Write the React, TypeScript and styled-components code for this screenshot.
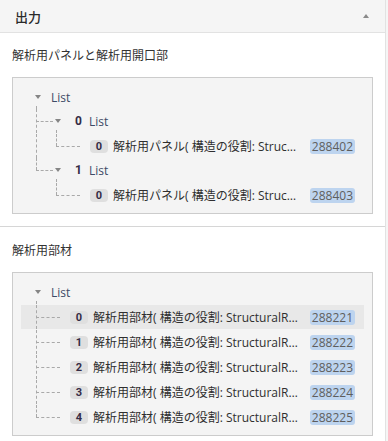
import styled, { createGlobalStyle } from 'styled-components';

type TreeNode =
  | { kind: 'list'; index?: number; children: TreeNode[] }
  | { kind: 'item'; index: number; label: string; id: string };

type Cell = 'none' | 'pass' | 'elbow' | 'elbowLast';

type FlatRow = {
  node: TreeNode;
  depth: number;
  cells: Cell[];
};

const panels: TreeNode = {
  kind: 'list',
  children: [
    {
      kind: 'list',
      index: 0,
      children: [
        { kind: 'item', index: 0, label: '解析用パネル( 構造の役割: StructuralRole.Panel )', id: '288402' },
      ],
    },
    {
      kind: 'list',
      index: 1,
      children: [
        { kind: 'item', index: 0, label: '解析用パネル( 構造の役割: StructuralRole.Panel )', id: '288403' },
      ],
    },
  ],
};

const members: TreeNode = {
  kind: 'list',
  children: [
    { kind: 'item', index: 0, label: '解析用部材( 構造の役割: StructuralRole.Beam )', id: '288221' },
    { kind: 'item', index: 1, label: '解析用部材( 構造の役割: StructuralRole.Beam )', id: '288222' },
    { kind: 'item', index: 2, label: '解析用部材( 構造の役割: StructuralRole.Column )', id: '288223' },
    { kind: 'item', index: 3, label: '解析用部材( 構造の役割: StructuralRole.Column )', id: '288224' },
    { kind: 'item', index: 4, label: '解析用部材( 構造の役割: StructuralRole.Column )', id: '288225' },
  ],
};

// flatten the tree so every row knows which guide lines pass through it
const flatten = (node: TreeNode, depth = 0, trail: boolean[] = [], out: FlatRow[] = []) => {
  const cells: Cell[] = trail.map((last, i) => {
    if (i === trail.length - 1) return last ? 'elbowLast' : 'elbow';
    return last ? 'none' : 'pass';
  });
  out.push({ node, depth, cells });
  if (node.kind === 'list') {
    node.children.forEach((child, i) =>
      flatten(child, depth + 1, [...trail, i === node.children.length - 1], out)
    );
  }
  return out;
};

const GlobalStyle = createGlobalStyle`
  html, body {
    margin: 0;
    padding: 0;
    background: #f5f5f5;
  }
  body {
    font-family: 'Open Sans', 'Noto Sans CJK JP', sans-serif;
    font-size: 12px;
    color: #333;
  }
`;

const Panel = styled.div`
  width: 385px;
  border-right: 1px solid #e2e2e2;
  background: #fff;
`;

const Header = styled.div`
  height: 32px;
  display: flex;
  align-items: center;
  justify-content: space-between;
  padding: 0 16px 0 15px;
  background: #f5f5f5;
  border-bottom: 1px solid #e2e2e2;
`;

const HeaderTitle = styled.span`
  font-size: 13px;
  font-weight: 500;
  color: #2a2a2a;
`;

const Collapse = styled.span`
  width: 0;
  height: 0;
  border-left: 3.5px solid transparent;
  border-right: 3.5px solid transparent;
  border-bottom: 4px solid #8a8a8a;
`;

const Section = styled.section<{ $top: number }>`
  padding: ${(p) => p.$top}px 12px 12px;
  border-bottom: 1px solid #d6d6d6;

  &:last-child {
    border-bottom: none;
    padding-bottom: 8px;
  }
`;

const SectionTitle = styled.div`
  height: 18px;
  line-height: 18px;
  margin-bottom: 12px;
  color: #333;
`;

const Box = styled.div`
  background: #f4f4f4;
  border: 1px solid #cccccc;
  padding: 7px 8px 6px;
`;

const Row = styled.div<{ $selected?: boolean; $leaf?: boolean }>`
  display: flex;
  align-items: center;
  height: 24px;
  padding: 0 9px 0 14px;
  margin-top: ${(p) => (p.$leaf ? 1 : 0)}px;
  background: ${(p) => (p.$selected ? '#e8e8e8' : 'transparent')};
`;

const Guide = styled.span<{ $mode: Cell; $reach: number }>`
  position: relative;
  flex: 0 0 20px;
  height: 24px;

  &::before {
    content: '';
    display: ${(p) => (p.$mode === 'none' ? 'none' : 'block')};
    position: absolute;
    left: 1px;
    top: 0;
    height: ${(p) => (p.$mode === 'elbowLast' ? '12px' : '24px')};
    border-left: 1px dashed #a9a9a9;
  }

  &::after {
    content: '';
    display: ${(p) => (p.$mode === 'elbow' || p.$mode === 'elbowLast' ? 'block' : 'none')};
    position: absolute;
    left: 1px;
    top: 12px;
    width: ${(p) => p.$reach}px;
    border-top: 1px dashed #a9a9a9;
  }
`;

const Toggle = styled.span<{ $open: boolean }>`
  position: relative;
  flex: 0 0 16px;
  height: 24px;
  display: flex;
  align-items: center;

  &::before {
    content: '';
    width: 0;
    height: 0;
    border-left: 3.5px solid transparent;
    border-right: 3.5px solid transparent;
    border-top: 4px solid #858585;
  }

  &::after {
    content: '';
    display: ${(p) => (p.$open ? 'block' : 'none')};
    position: absolute;
    left: 1px;
    top: 21px;
    bottom: 0;
    border-left: 1px dashed #a9a9a9;
  }
`;

const LeafGap = styled.span`
  flex: 0 0 15px;
`;

const ListIndex = styled.span`
  margin-left: 4px;
  margin-right: 7px;
  font-family: Roboto, 'Liberation Sans', sans-serif;
  font-weight: 700;
  font-size: 12px;
  color: #352c45;
`;

const ListName = styled.span`
  color: #3d4a66;
  font-size: 12px;
`;

const IndexBadge = styled.span`
  flex: 0 0 18px;
  height: 13px;
  line-height: 13px;
  border-radius: 4px;
  background: #dfdfdf;
  text-align: center;
  font-family: Roboto, 'Liberation Sans', sans-serif;
  font-weight: 700;
  font-size: 11px;
  color: #352c45;
`;

const Label = styled.span`
  flex: 1 1 auto;
  min-width: 0;
  margin: 0 12px 0 5px;
  overflow: hidden;
  text-overflow: ellipsis;
  white-space: nowrap;
  font-size: 12px;
  color: #2f2f2f;
`;

const IdBadge = styled.span`
  flex-shrink: 0;
  margin-left: auto;
  height: 15px;
  line-height: 15px;
  padding: 0 2px;
  border-radius: 3px;
  background: #bdd4ef;
  color: #5e5e5e;
  font-size: 12px;
`;

const Tree = ({ root, selected }: { root: TreeNode; selected?: string }) => (
  <Box>
    {flatten(root).map((row, i) => {
      const { node, cells } = row;
      const leaf = node.kind === 'item';
      return (
        <Row key={i} $leaf={leaf} $selected={leaf && node.id === selected}>
          {cells.map((mode, k) => (
            <Guide key={k} $mode={mode} $reach={leaf ? 24 : 17} />
          ))}
          {node.kind === 'list' ? (
            <>
              <Toggle $open={node.children.length > 0} />
              {node.index !== undefined && <ListIndex>{node.index}</ListIndex>}
              <ListName>List</ListName>
            </>
          ) : (
            <>
              <LeafGap />
              <IndexBadge>{node.index}</IndexBadge>
              <Label>{node.label}</Label>
              <IdBadge>{node.id}</IdBadge>
            </>
          )}
        </Row>
      );
    })}
  </Box>
);

export default function App() {
  return (
    <>
      <GlobalStyle />
      <Panel>
        <Header>
          <HeaderTitle>出力</HeaderTitle>
          <Collapse />
        </Header>
        <Section $top={14}>
          <SectionTitle>解析用パネルと解析用開口部</SectionTitle>
          <Tree root={panels} />
        </Section>
        <Section $top={15}>
          <SectionTitle>解析用部材</SectionTitle>
          <Tree root={members} selected="288221" />
        </Section>
      </Panel>
    </>
  );
}
